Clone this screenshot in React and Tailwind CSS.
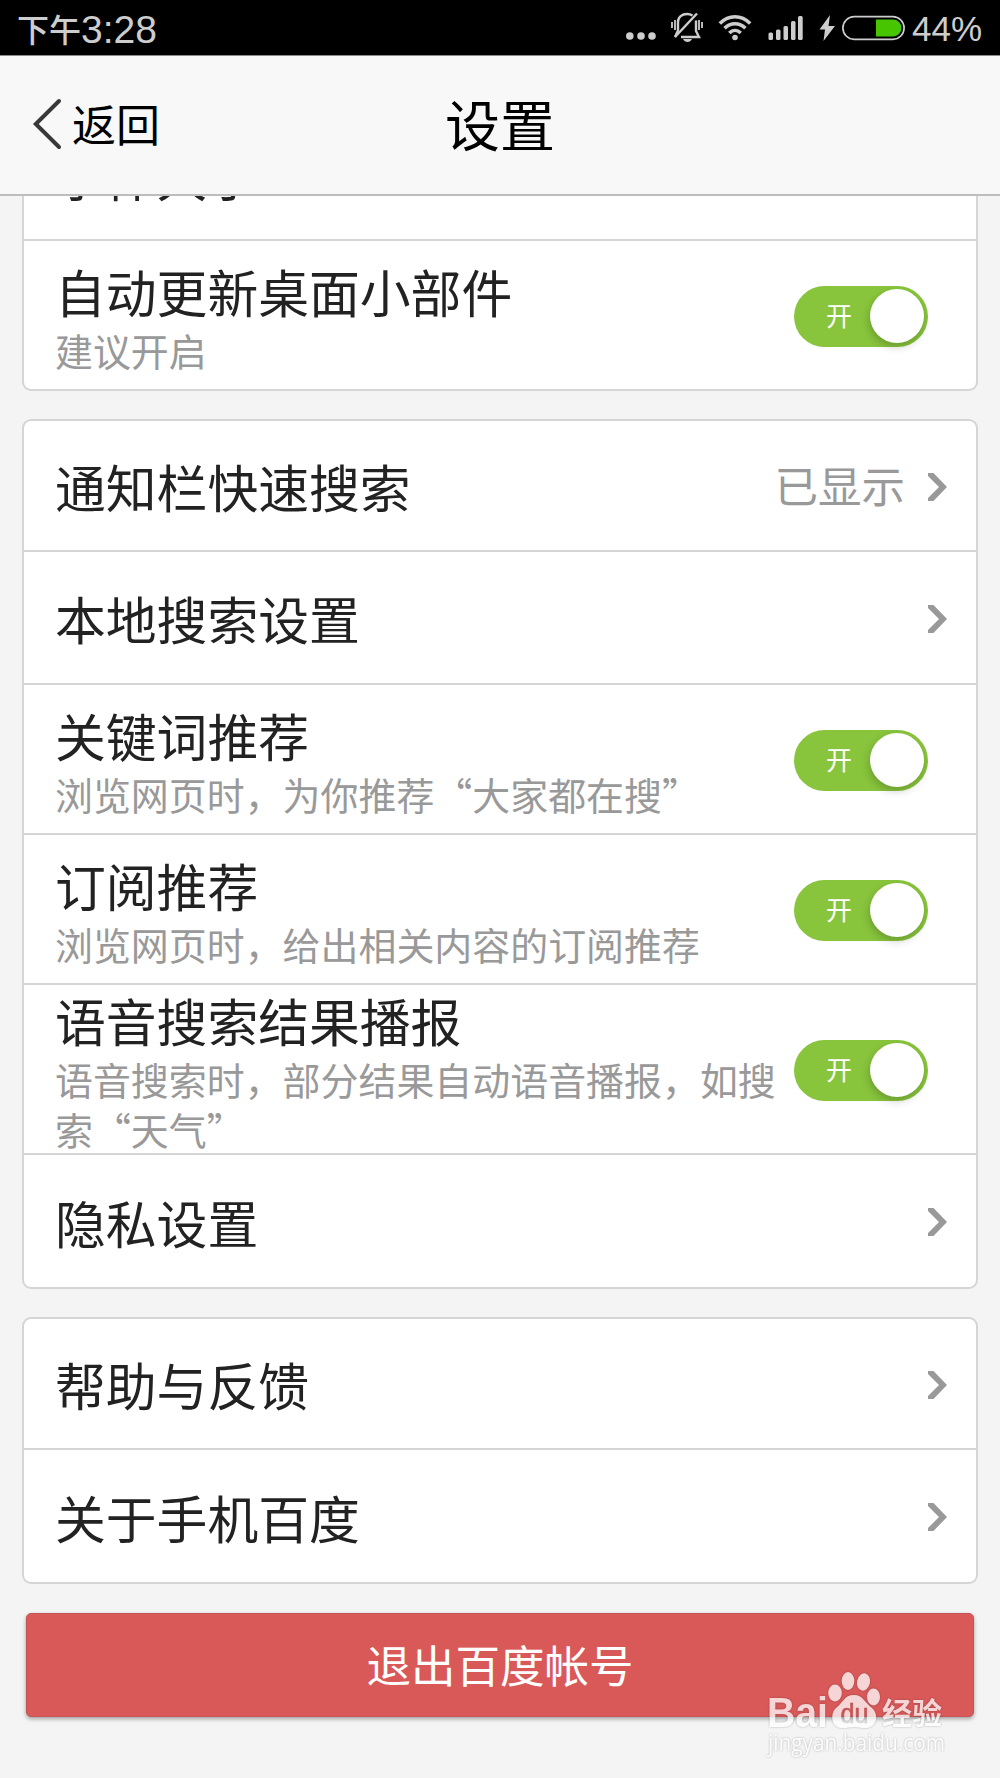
const groups = [
  {
    id: "display",
    rows: [
      { title: "字体大小", value: "中", size: "h-[131px]" },
      { title: "自动更新桌面小部件", note: "建议开启", toggle: true, size: "h-[148px]" },
    ],
  },
  {
    id: "search",
    rows: [
      { title: "通知栏快速搜索", value: "已显示", link: true, size: "h-[131px]" },
      { title: "本地搜索设置", link: true, size: "h-[133px]" },
      { title: "关键词推荐", note: "浏览网页时，为你推荐“大家都在搜”", toggle: true, size: "h-[150px]" },
      { title: "订阅推荐", note: "浏览网页时，给出相关内容的订阅推荐", toggle: true, size: "h-[150px]" },
      { title: "语音搜索结果播报", note: "语音搜索时，部分结果自动语音播报，如搜索“天气”", toggle: true, size: "h-[170px]" },
      { title: "隐私设置", link: true, size: "h-[132px]" },
    ],
  },
  {
    id: "about",
    rows: [
      { title: "帮助与反馈", link: true, size: "h-[131px]" },
      { title: "关于手机百度", link: true, size: "h-[132px]" },
    ],
  },
];

function StatusBar() {
  return (
    <div className="flex h-[56px] items-center border-b border-[#8a8a8a] bg-black pl-[17px] text-[#cdcdcd]">
      <div className="flex flex-1 items-center whitespace-nowrap">
        <span className="text-[32px] font-medium leading-none">下午</span>
        <span className="pt-[3px] font-['Liberation_Sans'] text-[39px] leading-none">3:28</span>
      </div>
      <svg className="h-8 w-[30px]" viewBox="0 0 30 32" fill="currentColor">
        <circle cx="3.8" cy="24" r="3.8" />
        <circle cx="15" cy="24" r="3.8" />
        <circle cx="26" cy="24" r="3.8" />
      </svg>
      <svg className="ml-[15px] h-8 w-8" viewBox="0 0 32 32" fill="none" stroke="currentColor" strokeWidth="2.4">
        <path d="M1 10v6M4 8v10M28 8v10M31 10v6" strokeWidth="1.8" />
        <path d="M7 19V10c0-5 4-8 9-8 2 0 4 .6 5.500 1.600M25 8.500V19l3 6H10M7 18.500L4 25" />
        <path d="M26 1.500L4 25" strokeWidth="2.400" />
        <path d="M12 27h9c-1 2-2.500 3-4.500 3S13 29 12 27z" fill="currentColor" stroke="none" />
      </svg>
      <svg className="ml-[15px] h-8 w-[34px]" viewBox="0 0 34 32" fill="none" stroke="currentColor" strokeWidth="3.600">
        <path d="M1.800 11.500c9-9 21.400-9 30.400 0" />
        <path d="M6.600 16.300c6-6 14.800-6 20.800 0" />
        <path d="M11.300 21c3.400-3.400 8-3.400 11.400 0" />
        <circle cx="17" cy="25.500" r="2.800" fill="currentColor" stroke="none" />
      </svg>
      <svg className="ml-[16px] h-8 w-[35px]" viewBox="0 0 35 32" fill="currentColor">
        <rect x="0.500" y="20.500" width="4.500" height="7.500" rx="1.500" />
        <rect x="8" y="17.500" width="4.500" height="10.500" rx="1.500" />
        <rect x="15.500" y="14" width="4.500" height="14" rx="1.500" />
        <rect x="23" y="9" width="4.500" height="19" rx="1.500" />
        <rect x="30" y="4" width="4.700" height="24" rx="1.500" />
      </svg>
      <svg className="ml-[16px] h-8 w-[16px]" viewBox="0 0 16 32" fill="currentColor">
        <path d="M11 3L0.500 17.500H6L4.500 29 16 14H9.500z" />
      </svg>
      <svg className="ml-[7px] h-8 w-[63px]" viewBox="0 0 63 32" fill="none">
        <rect x="0.900" y="4.700" width="61.200" height="22.600" rx="11.300" stroke="currentColor" strokeWidth="1.700" />
        <path d="M34 7.500H51a8.500 8.500 0 0 1 0 17H34z" fill="#47c500" />
      </svg>
      <span className="ml-[7px] w-[88px] pt-0.5 font-['Liberation_Sans'] text-[35px] leading-none">44%</span>
    </div>
  );
}

function Header() {
  return (
    <header className="grid h-[140px] grid-cols-3 items-center border-b-2 border-[#bdbdbd] bg-[#f8f8f8] pb-[3px] text-black">
      <div className="flex items-center pl-8">
        <svg className="h-[54px] w-[30px]" viewBox="0 0 30 54" fill="none" stroke="#383838" strokeWidth="4" strokeLinecap="round">
          <path d="M27 4L3.800 27 27 50" />
        </svg>
        <span className="ml-2.5 pb-0.5 text-[44px] leading-none">返回</span>
      </div>
      <h1 className="pb-0.5 text-center text-[55px] leading-none">设置</h1>
    </header>
  );
}

function Toggle() {
  return (
    <div className="flex h-[61px] w-[134px] shrink-0 items-center rounded-full bg-[#88c43c] pl-8 pr-[4px]">
      <span className="flex-1 pb-0.5 text-[26px] leading-none text-white">开</span>
      <span className="size-[54px] rounded-full bg-white shadow-[-1px_4px_9px_rgba(0,0,0,0.200)]" />
    </div>
  );
}

function Chevron() {
  return (
    <svg className="ml-[23px] mr-2 h-7 w-[19px] shrink-0" viewBox="0 0 19 28" fill="#999">
      <path d="M0 0h5.500L19 14 5.500 28H0v-3l11-11L0 3z" />
    </svg>
  );
}

function Row({ row, last }) {
  return (
    <div className={`${row.size} ${last ? "" : "border-b-2 border-[#d5d5d5]"} flex items-center pt-0.5 pl-[31px] pr-[21px]`}>
      <div className="w-[728px] pb-px">
        <div className="whitespace-nowrap text-[50.800px] leading-[68px] text-[#222]">{row.title}</div>
        {row.note && <div className="text-[37.950px] leading-[50px] text-[#999]">{row.note}</div>}
      </div>
      <div className="flex flex-1 items-center justify-end">
        {row.value && (
          <span className={`${row.link ? "" : "mr-[11px]"} -ml-24 whitespace-nowrap pb-[3px] text-[43.500px] leading-none text-[#999]`}>{row.value}</span>
        )}
        {row.link && <Chevron />}
        {row.toggle && (
          <div className="mr-[27px]">
            <Toggle />
          </div>
        )}
      </div>
    </div>
  );
}

function Watermark() {
  return (
    <svg className="absolute bottom-[18px] right-[50px] h-[92px] w-[186px]" viewBox="0 0 186 92" fill="#fff">
      <mask id="paw">
        <path d="M90 27c-10 0-11 8-18 13-6 5-5 19 5 20 5 .500 8-1 13-1s8 1.500 13 1c10-1 12-14 5-20-7-5-9-13-18-13z" />
        <text x="76.500" y="55" fontFamily="Liberation Sans" fontSize="27" textLength="28" lengthAdjust="spacingAndGlyphs" fill="#000" stroke="#000" strokeWidth="0.600">du</text>
      </mask>
      <g opacity="0.750" className="drop-shadow-[0_0_1px_rgba(0,0,0,0.350)]">
        <text x="3" y="59" fontFamily="Liberation Sans" fontWeight="700" fontSize="42" textLength="61" lengthAdjust="spacingAndGlyphs">Bai</text>
        <ellipse cx="71" cy="25" rx="6.800" ry="8.500" />
        <ellipse cx="84" cy="13" rx="6.300" ry="9" />
        <ellipse cx="99.500" cy="14" rx="6.500" ry="8.700" transform="rotate(12 99.500 14)" />
        <ellipse cx="109.500" cy="29" rx="6.500" ry="8.500" />
        <rect x="64" y="24" width="54" height="40" mask="url(#paw)" />
        <text x="118" y="56" fontFamily="Noto Sans CJK SC" fontWeight="700" fontSize="30">经验</text>
        <text x="4" y="83" fontFamily="Open Sans" fontSize="23" textLength="177" lengthAdjust="spacingAndGlyphs">jingyan.baidu.com</text>
      </g>
    </svg>
  );
}

export default function App() {
  return (
    <div lang="zh-CN" className="relative flex h-[1778px] w-[1000px] flex-col overflow-hidden bg-[#f4f4f4] font-['Noto_Sans_CJK_SC',sans-serif]">
      <StatusBar />
      <Header />
      <main className="min-h-0 flex-1 overflow-hidden px-[22px]">
        {/* list is scrolled, so the first group starts above the fold */}
        <div className="-mt-[88px] flex flex-col gap-7">
          {groups.map((group) => (
            <section key={group.id} className="rounded-[9px] border-2 border-[#d5d5d5] bg-white">
              {group.rows.map((row, i) => (
                <Row key={row.title} row={row} last={i === group.rows.length - 1} />
              ))}
            </section>
          ))}
          <button type="button" className="mx-1 mt-px h-[104px] rounded-[5px] border border-[#c25456] bg-[#d95959] pb-px text-[44.500px] leading-none text-white shadow-[0_2px_4px_rgba(0,0,0,0.350)]">
            退出百度帐号
          </button>
        </div>
      </main>
      <Watermark />
    </div>
  );
}
